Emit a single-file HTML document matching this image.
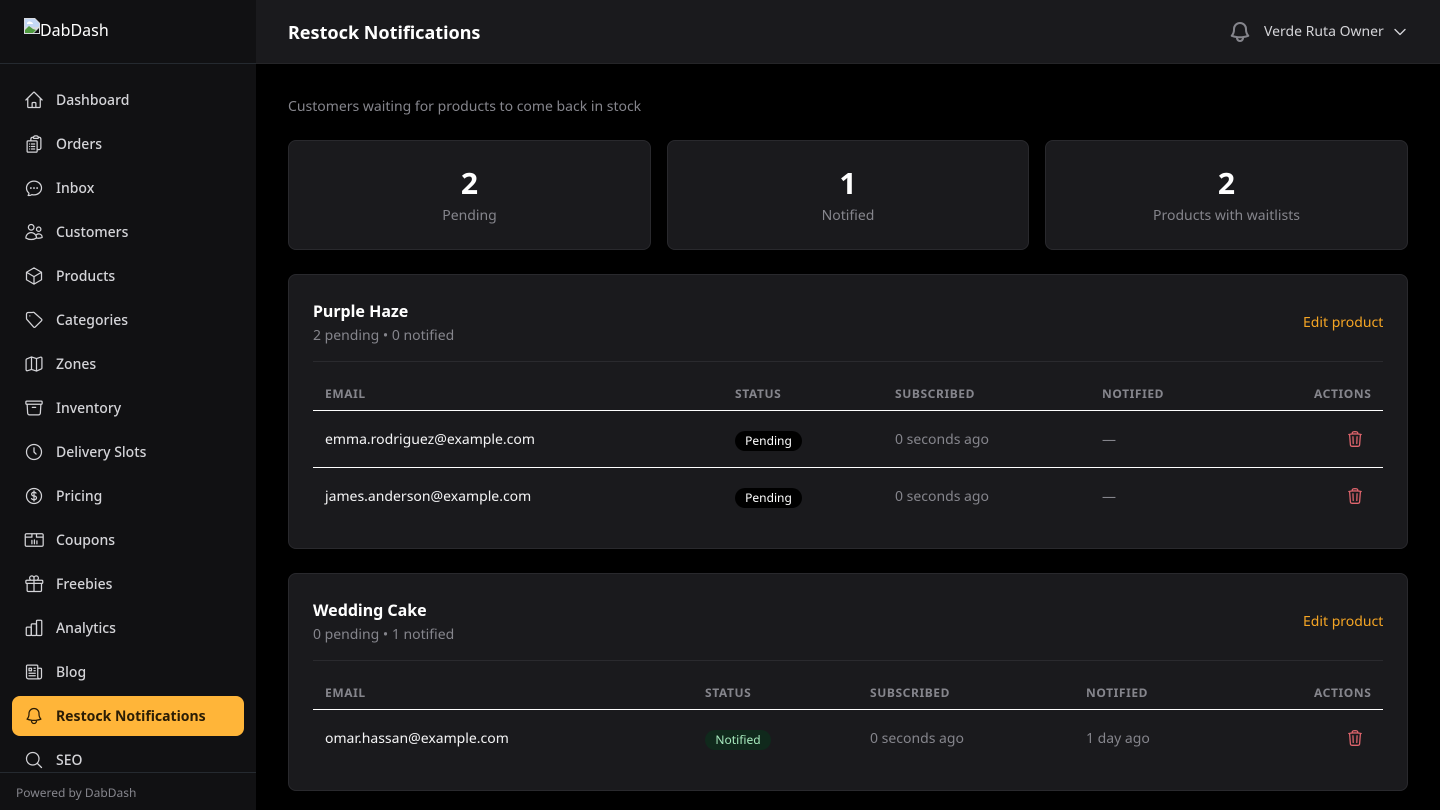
<!DOCTYPE html>
<html lang="en">
<head>
<meta charset="utf-8">
<title>Restock Notifications</title>
<style>
*{box-sizing:border-box;margin:0;padding:0}
html,body{width:1440px;height:810px;overflow:hidden;background:#000}
body{font-family:"Noto Sans","Liberation Sans","Noto Sans CJK JP",sans-serif;position:relative;color:#fff}
.abs{position:absolute}
.t{position:absolute;white-space:nowrap;line-height:20px}
svg{display:block;fill:none;stroke:currentColor;stroke-width:1.5;stroke-linecap:round;stroke-linejoin:round}
#side{left:0;top:0;width:256px;height:810px;background:#111113;overflow:hidden}
#side .n{position:absolute;left:12px;width:232px;height:40px;color:#d4d4d8}
#side .n svg{position:absolute;left:12px;top:10px;width:20px;height:20px}
#side .n span{position:absolute;left:44px;top:11px;line-height:20px;font-size:14px;font-weight:500;white-space:nowrap}
#side .n.on{background:#ffb539;border-radius:8px;color:#2b1d05}
#side .n.on span{font-weight:700}
.hr{position:absolute;height:1px}
.card{position:absolute;background:#1a1a1d;border:1px solid #29292d;border-radius:8px}
.th{position:absolute;white-space:nowrap;font-size:12px;font-weight:700;letter-spacing:.6px;color:#85858c;line-height:16px}
.g{color:#85858c;font-size:14px}
.em{font-size:14px;color:#f4f4f5}
.pill{position:absolute;height:20px;border-radius:10px;font-size:12px;line-height:20px;text-align:center;font-weight:400}
.tr{position:absolute;width:18px;height:18px;color:#e0656d}
.tr svg{width:18px;height:18px;stroke-width:1.7}
</style>
</head>
<body>
<div id="side" class="abs">
  <div class="abs" style="left:0;top:0;width:256px;height:64px;border-bottom:1px solid #252a30"></div>
  <svg class="abs" style="left:24px;top:18px;width:16px;height:16px;stroke:none" viewBox="0 0 16 16"><path fill="#d8dbe0" d="M0 0h11l5 5v11H0z"/><path fill="#c4d8f5" d="M1 1h9.500l4.500 4.500V9H1z"/><path fill="#fff" d="M3 5c1-2 3-2 4-1 1 0 2 1 2 2H3z"/><path fill="#4f9a3f" d="M1 15v-3l4-4 4 3 3 1-3 3z"/><path fill="#111113" d="M10 15l5-5v5z"/></svg>
  <div class="t" style="left:40px;top:20px;font-size:16px;color:#fff;font-weight:400">DabDash</div>

  <div class="n" style="top:80px"><svg viewBox="0 0 24 24"><path d="M2.250 12l8.954-8.955c.44-.439 1.152-.439 1.591 0L21.750 12M4.500 9.750v10.125c0 .621.504 1.125 1.125 1.125H9.750v-4.875c0-.621.504-1.125 1.125-1.125h2.250c.621 0 1.125.504 1.125 1.125V21h4.125c.621 0 1.125-.504 1.125-1.125V9.750M8.250 21h8.250"/></svg><span>Dashboard</span></div>
  <div class="n" style="top:124px"><svg viewBox="0 0 24 24"><path d="M9 12h3.750M9 15h3.750M9 18h3.750m3 .75H18a2.250 2.250 0 002.250-2.250V6.108c0-1.135-.845-2.098-1.976-2.192a48.424 48.424 0 00-1.123-.08m-5.801 0c-.065.21-.1.433-.1.664 0 .414.336.75.75.75h4.500a.75.75 0 00.75-.75 2.250 2.250 0 00-.1-.664m-5.800 0A2.251 2.251 0 0113.500 2.250H15c1.012 0 1.867.668 2.150 1.586m-5.800 0c-.376.023-.75.05-1.124.08C9.095 4.010 8.250 4.973 8.250 6.108V8.250m0 0H4.875c-.621 0-1.125.504-1.125 1.125v11.250c0 .621.504 1.125 1.125 1.125h9.750c.621 0 1.125-.504 1.125-1.125V9.375c0-.621-.504-1.125-1.125-1.125H8.250zM6.750 12h.008v.008H6.750V12zm0 3h.008v.008H6.750V15zm0 3h.008v.008H6.750V18z"/></svg><span>Orders</span></div>
  <div class="n" style="top:168px"><svg viewBox="0 0 24 24"><path d="M8.625 12a.375.375 0 11-.75 0 .375.375 0 01.75 0zm0 0H8.250m4.125 0a.375.375 0 11-.75 0 .375.375 0 01.75 0zm0 0H12m4.125 0a.375.375 0 11-.75 0 .375.375 0 01.75 0zm0 0h-.375M21 12c0 4.556-4.030 8.250-9 8.250a9.764 9.764 0 01-2.555-.337A5.972 5.972 0 015.410 20.970a5.969 5.969 0 01-.474-.065 4.480 4.480 0 00.978-2.025c.09-.457-.133-.901-.467-1.226C3.930 16.178 3 14.189 3 12c0-4.556 4.030-8.250 9-8.250s9 3.694 9 8.250z"/></svg><span>Inbox</span></div>
  <div class="n" style="top:212px"><svg viewBox="0 0 24 24"><path d="M15 19.128a9.380 9.380 0 002.625.372 9.337 9.337 0 004.121-.952 4.125 4.125 0 00-7.533-2.493M15 19.128v-.003c0-1.113-.285-2.160-.786-3.070M15 19.128v.106A12.318 12.318 0 018.624 21c-2.331 0-4.512-.645-6.374-1.766l-.001-.109a6.375 6.375 0 0111.964-3.070M12 6.375a3.375 3.375 0 11-6.750 0 3.375 3.375 0 016.750 0zm8.250 2.250a2.625 2.625 0 11-5.250 0 2.625 2.625 0 015.250 0z"/></svg><span>Customers</span></div>
  <div class="n" style="top:256px"><svg viewBox="0 0 24 24"><path d="M21 7.500l-9-5.250L3 7.500m18 0l-9 5.250m9-5.250v9l-9 5.250M3 7.500l9 5.250M3 7.500v9l9 5.250m0-9v9"/></svg><span>Products</span></div>
  <div class="n" style="top:300px"><svg viewBox="0 0 24 24"><path d="M10 3H5a2 2 0 00-2 2v5c0 .6.2 1.100.6 1.500l8 9c.5.5 1.300.5 1.800 0l7.700-7.700c.5-.5.5-1.300 0-1.800l-9-8A2 2 0 0010 3z"/><path d="M7 7h.008v.008H7V7z"/></svg><span>Categories</span></div>
  <div class="n" style="top:344px"><svg viewBox="0 0 24 24"><path d="M9 4v14.500M15 5.500V20M15 20.500l5.800-2.600c.5-.2.7-.6.7-1.100V4.900c0-.9-.9-1.400-1.700-1.100L15 5.500 9 3.500 3.200 5.900c-.5.2-.7.6-.7 1.100v11.900c0 .9.9 1.400 1.700 1.100L9 18.500z"/></svg><span>Zones</span></div>
  <div class="n" style="top:388px"><svg viewBox="0 0 24 24"><path d="M20.250 7.500l-.625 10.632a2.250 2.250 0 01-2.247 2.118H6.622a2.250 2.250 0 01-2.247-2.118L3.750 7.500M10 11.250h4M3.375 7.500h17.250c.621 0 1.125-.504 1.125-1.125v-1.500c0-.621-.504-1.125-1.125-1.125H3.375c-.621 0-1.125.504-1.125 1.125v1.500c0 .621.504 1.125 1.125 1.125z"/></svg><span>Inventory</span></div>
  <div class="n" style="top:432px"><svg viewBox="0 0 24 24"><path d="M12 7v5l2.500 2.500M21 12a9 9 0 11-18 0 9 9 0 0118 0z"/></svg><span>Delivery Slots</span></div>
  <div class="n" style="top:476px"><svg viewBox="0 0 24 24"><path d="M12 6v12m-3-2.818l.879.659c1.171.879 3.070.879 4.242 0 1.172-.879 1.172-2.303 0-3.182C13.536 12.219 12.768 12 12 12c-.725 0-1.450-.22-2.003-.659-1.106-.879-1.106-2.303 0-3.182s2.900-.879 4.006 0l.415.33M21 12a9 9 0 11-18 0 9 9 0 0118 0z"/></svg><span>Pricing</span></div>
  <div class="n" style="top:520px"><svg viewBox="0 0 24 24"><path d="M3 4.500h18.500c.8 0 1.500.7 1.500 1.500v12c0 .8-.7 1.500-1.500 1.500H3c-.8 0-1.500-.7-1.500-1.500V6c0-.8.7-1.500 1.500-1.500zM1.500 8.500H9.500V4.500M15 4.500V8.500H23M9.500 12.500v4M12.500 12v4.500M15.500 13v3.500"/></svg><span>Coupons</span></div>
  <div class="n" style="top:564px"><svg viewBox="0 0 24 24"><path d="M21 11.250v8.250a1.500 1.500 0 01-1.500 1.500H5.250a1.500 1.500 0 01-1.500-1.500v-8.250M12 4.875A2.625 2.625 0 109.375 7.500H12m0-2.625V7.500m0-2.625A2.625 2.625 0 1114.625 7.500H12m0 0V21m-8.625-9.750h18c.621 0 1.125-.504 1.125-1.125v-1.500c0-.621-.504-1.125-1.125-1.125h-18c-.621 0-1.125.504-1.125 1.125v1.500c0 .621.504 1.125 1.125 1.125z"/></svg><span>Freebies</span></div>
  <div class="n" style="top:608px"><svg viewBox="0 0 24 24"><rect x="2.700" y="11" width="6" height="10" rx="1.200"/><rect x="8.700" y="7" width="6.300" height="14" rx="1.200"/><rect x="15" y="2.700" width="6.300" height="18.300" rx="1.200"/></svg><span>Analytics</span></div>
  <div class="n" style="top:652px"><svg viewBox="0 0 24 24"><path d="M12 7.500h1.500m-1.500 3h1.500m-7.500 3h7.500m-7.500 3h7.500m3-9h3.375c.621 0 1.125.504 1.125 1.125V18a2.250 2.250 0 01-2.250 2.250M16.500 7.500V18a2.250 2.250 0 002.250 2.250M16.500 7.500V4.875c0-.621-.504-1.125-1.125-1.125H4.125C3.504 3.750 3 4.254 3 4.875V18a2.250 2.250 0 002.250 2.250h13.500M6 7.500h3v3H6v-3z"/></svg><span>Blog</span></div>
  <div class="n on" style="top:696px"><svg viewBox="0 0 24 24"><path d="M14.857 17.082a23.848 23.848 0 005.454-1.310A8.967 8.967 0 0118 9.750v-.7V9A6 6 0 006 9v.75a8.967 8.967 0 01-2.312 6.022c1.733.64 3.560 1.085 5.455 1.310m5.714 0a24.255 24.255 0 01-5.714 0m5.714 0a3 3 0 11-5.714 0"/></svg><span>Restock Notifications</span></div>
  <div class="n" style="top:740px"><svg viewBox="0 0 24 24"><path d="M21 21l-5.197-5.197m0 0A7.500 7.500 0 105.196 5.196a7.500 7.500 0 0010.607 10.607z"/></svg><span>SEO</span></div>

  <div class="abs" style="left:0;top:772px;width:256px;height:38px;background:#111113;border-top:1px solid #252a30"></div>
  <div class="t" style="left:16px;top:783px;font-size:12px;color:#85858c">Powered by DabDash</div>
</div>

<div class="abs" style="left:256px;top:0;width:1184px;height:64px;background:#1a1a1d;border-bottom:1px solid #252528"></div>
<div class="t" style="left:288px;top:21px;font-size:18px;line-height:24px;font-weight:700;color:#fff">Restock Notifications</div>
<svg class="abs" style="left:1228px;top:20px;width:24px;height:24px;color:#85858c;stroke-width:2" viewBox="0 0 24 24"><path d="M14.857 17.082a23.848 23.848 0 005.454-1.310A8.967 8.967 0 0118 9.750v-.7V9A6 6 0 006 9v.75a8.967 8.967 0 01-2.312 6.022c1.733.64 3.560 1.085 5.455 1.310m5.714 0a24.255 24.255 0 01-5.714 0m5.714 0a3 3 0 11-5.714 0"/></svg>
<div class="t" style="left:1264px;top:22px;font-size:14px;font-weight:400;color:#d4d4d8">Verde Ruta Owner</div>
<svg class="abs" style="left:1392px;top:24px;width:16px;height:16px;color:#d4d4d8;stroke-width:2" viewBox="0 0 24 24"><path d="M19.500 8.250l-7.500 7.500-7.500-7.500"/></svg>

<div class="t" style="left:288px;top:97px;font-size:14px;color:#85858c">Customers waiting for products to come back in stock</div>

<div class="card" style="left:288px;top:140px;width:363px;height:110px"></div>
<div class="card" style="left:667px;top:140px;width:362px;height:110px"></div>
<div class="card" style="left:1045px;top:140px;width:363px;height:110px"></div>
<div class="t" style="left:288px;top:165px;width:363px;text-align:center;font-size:30px;line-height:36px;font-weight:700">2</div>
<div class="t" style="left:667px;top:165px;width:362px;text-align:center;font-size:30px;line-height:36px;font-weight:700">1</div>
<div class="t" style="left:1045px;top:165px;width:363px;text-align:center;font-size:30px;line-height:36px;font-weight:700">2</div>
<div class="t g" style="left:288px;top:206px;width:363px;text-align:center">Pending</div>
<div class="t g" style="left:667px;top:206px;width:362px;text-align:center">Notified</div>
<div class="t g" style="left:1045px;top:206px;width:363px;text-align:center">Products with waitlists</div>

<div class="card" style="left:288px;top:274px;width:1120px;height:275px"></div>
<div class="t" style="left:313px;top:300px;font-size:16px;line-height:22px;font-weight:700">Purple Haze</div>
<div class="t g" style="left:313px;top:326px">2 pending • 0 notified</div>
<div class="t" style="left:1303px;top:313px;font-size:14px;color:#f5a524;font-weight:400">Edit product</div>
<div class="hr" style="left:313px;top:361px;width:1070px;background:#2a2a2e"></div>
<div class="th" style="left:325px;top:386px">EMAIL</div>
<div class="th" style="left:735px;top:386px">STATUS</div>
<div class="th" style="left:895px;top:386px">SUBSCRIBED</div>
<div class="th" style="left:1102px;top:386px">NOTIFIED</div>
<div class="th" style="left:1314px;top:386px">ACTIONS</div>
<div class="hr" style="left:313px;top:410px;width:1070px;background:#fff"></div>
<div class="t em" style="left:325px;top:430px">emma.rodriguez@example.com</div>
<div class="pill" style="left:735px;top:431px;width:67px;background:#000;color:#fff">Pending</div>
<div class="t g" style="left:895px;top:430px">0 seconds ago</div>
<div class="t g" style="left:1102px;top:430px">—</div>
<div class="tr" style="left:1346px;top:430px"><svg viewBox="0 0 24 24"><path d="M14.740 9l-.346 9m-4.788 0L9.260 9m9.968-3.210c.342.052.682.107 1.022.166m-1.022-.165L18.160 19.673a2.250 2.250 0 01-2.244 2.077H8.084a2.250 2.250 0 01-2.244-2.077L4.772 5.790m14.456 0a48.108 48.108 0 00-3.478-.397m-12 .562c.34-.059.68-.114 1.022-.165m0 0a48.110 48.110 0 013.478-.397m7.500 0v-.916c0-1.180-.91-2.164-2.090-2.201a51.964 51.964 0 00-3.320 0c-1.180.037-2.090 1.022-2.090 2.201v.916m7.500 0a48.667 48.667 0 00-7.500 0"/></svg></div>
<div class="hr" style="left:313px;top:467px;width:1070px;background:#fff"></div>
<div class="t em" style="left:325px;top:487px">james.anderson@example.com</div>
<div class="pill" style="left:735px;top:488px;width:67px;background:#000;color:#fff">Pending</div>
<div class="t g" style="left:895px;top:487px">0 seconds ago</div>
<div class="t g" style="left:1102px;top:487px">—</div>
<div class="tr" style="left:1346px;top:487px"><svg viewBox="0 0 24 24"><path d="M14.740 9l-.346 9m-4.788 0L9.260 9m9.968-3.210c.342.052.682.107 1.022.166m-1.022-.165L18.160 19.673a2.250 2.250 0 01-2.244 2.077H8.084a2.250 2.250 0 01-2.244-2.077L4.772 5.790m14.456 0a48.108 48.108 0 00-3.478-.397m-12 .562c.34-.059.68-.114 1.022-.165m0 0a48.110 48.110 0 013.478-.397m7.500 0v-.916c0-1.180-.91-2.164-2.090-2.201a51.964 51.964 0 00-3.320 0c-1.180.037-2.090 1.022-2.090 2.201v.916m7.500 0a48.667 48.667 0 00-7.500 0"/></svg></div>

<div class="card" style="left:288px;top:573px;width:1120px;height:218px"></div>
<div class="t" style="left:313px;top:599px;font-size:16px;line-height:22px;font-weight:700">Wedding Cake</div>
<div class="t g" style="left:313px;top:625px">0 pending • 1 notified</div>
<div class="t" style="left:1303px;top:612px;font-size:14px;color:#f5a524;font-weight:400">Edit product</div>
<div class="hr" style="left:313px;top:660px;width:1070px;background:#2a2a2e"></div>
<div class="th" style="left:325px;top:685px">EMAIL</div>
<div class="th" style="left:705px;top:685px">STATUS</div>
<div class="th" style="left:870px;top:685px">SUBSCRIBED</div>
<div class="th" style="left:1086px;top:685px">NOTIFIED</div>
<div class="th" style="left:1314px;top:685px">ACTIONS</div>
<div class="hr" style="left:313px;top:709px;width:1070px;background:#fff"></div>
<div class="t em" style="left:325px;top:729px">omar.hassan@example.com</div>
<div class="pill" style="left:705px;top:730px;width:66px;background:#10291c;color:#a6e9bd">Notified</div>
<div class="t g" style="left:870px;top:729px">0 seconds ago</div>
<div class="t g" style="left:1086px;top:729px">1 day ago</div>
<div class="tr" style="left:1346px;top:729px"><svg viewBox="0 0 24 24"><path d="M14.740 9l-.346 9m-4.788 0L9.260 9m9.968-3.210c.342.052.682.107 1.022.166m-1.022-.165L18.160 19.673a2.250 2.250 0 01-2.244 2.077H8.084a2.250 2.250 0 01-2.244-2.077L4.772 5.790m14.456 0a48.108 48.108 0 00-3.478-.397m-12 .562c.34-.059.68-.114 1.022-.165m0 0a48.110 48.110 0 013.478-.397m7.500 0v-.916c0-1.180-.91-2.164-2.090-2.201a51.964 51.964 0 00-3.320 0c-1.180.037-2.090 1.022-2.090 2.201v.916m7.500 0a48.667 48.667 0 00-7.500 0"/></svg></div>
</body>
</html>
